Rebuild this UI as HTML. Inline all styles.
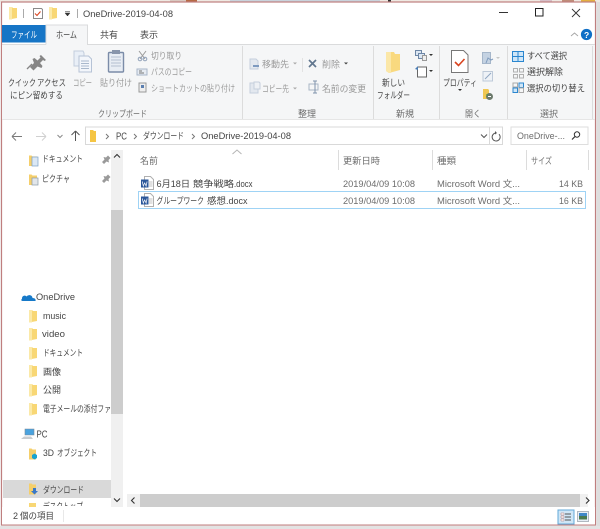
<!DOCTYPE html>
<html lang="ja"><head><meta charset="utf-8">
<style>
html,body{margin:0;padding:0;width:600px;height:529px;overflow:hidden;background:#f4f4f4}
svg{display:block;filter:blur(.3px)}
text{font-family:"Liberation Sans","Noto Sans CJK JP",sans-serif;font-size:9px;fill:#333}
.g{fill:#9a9a9a}.d{fill:#444}.m{fill:#6d6d6d}.b{fill:#222}
.l{stroke:#dcdcdc;stroke-width:1;fill:none}
</style></head><body>
<svg width="600" height="529" viewBox="0 0 600 529" xmlns="http://www.w3.org/2000/svg">
<defs>
<g id="fo"><path d="M0 1h3l1 1h4v10L0 13.500z" fill="#f8d775"/><path d="M0 1h3v12.500H0z" fill="#fbe9a8"/></g>
<g id="pin"><path d="M2 8l2.500-2.500-1-2.500L6 3.500 8 1.500 10.500 4 8.500 6l.5 2.500-2.500-1L4 10z" fill="#9a9a9a"/></g>
<g id="wd"><path d="M3.500.5h6l3 3v10h-9z" fill="#fff" stroke="#b0b0b0"/><path d="M8 6h3.500M8 8h3.500M8 10h3.500" stroke="#c0c0c0"/><rect x="0" y="3.500" width="7.500" height="8" fill="#2b579a"/><path d="M1.300 5.500l1 4.500 1.400-3 1.400 3 1-4.500" stroke="#fff" stroke-width=".7" fill="none"/></g>
</defs>
<rect width="600" height="529" fill="#f6f6f6"/>
<rect x="0" y="0" width="600" height="2" fill="#efe9e2"/>
<rect x="170" y="0" width="25" height="1.500" fill="#d9c8c0"/><rect x="186" y="0" width="11" height="2" fill="#b66a45"/><rect x="230" y="0" width="150" height="1.500" fill="#c9d3dc"/><rect x="388" y="0" width="3" height="2" fill="#333"/><rect x="540" y="0" width="12" height="2" fill="#d6bfc8"/><rect x="562" y="0" width="12" height="2" fill="#bf8c78"/><rect x="581" y="0" width="14" height="2" fill="#e4b040"/>
<rect x="1.500" y="2" width="594" height="523" fill="#fff" stroke="#bf7f7f" stroke-width="1.200"/>
<rect x="596.500" y="2" width="3.500" height="527" fill="#dedede"/>
<rect x="0" y="526" width="600" height="3" fill="#e3e3e3"/>

<!-- title bar -->
<use href="#fo" x="9" y="6"/>
<path d="M23.500 9v9" stroke="#aaa"/>
<path d="M33.500 8.500h8l1 1v9h-9z" fill="#fff" stroke="#8a8a8a"/>
<path d="M35 13.500l2 2 3.500-4" stroke="#d9431f" stroke-width="1.100" fill="none"/>
<use href="#fo" x="49" y="6"/>
<path d="M65 11.500h5M65 13h5l-2.500 3z" fill="#333" stroke="#333" stroke-width=".5"/>
<path d="M77.500 9v9" stroke="#aaa"/>
<text x="83" y="17" class="d" lengthAdjust="spacingAndGlyphs" textLength="90">OneDrive-2019-04-08</text>
<path d="M499 12.500h9" stroke="#333" stroke-width="1"/>
<rect x="535.500" y="8.500" width="7.500" height="7.500" fill="none" stroke="#222" stroke-width="1"/>
<path d="M572 9l8 8M580 9l-8 8" stroke="#333" stroke-width=".9"/>

<!-- tabs -->
<rect x="2" y="25" width="43.500" height="17.500" fill="#1675c6"/>
<text x="11" y="38" style="fill:#fff" lengthAdjust="spacingAndGlyphs" textLength="26">ファイル</text>
<path d="M46 44.500V25h41.500v19.500" fill="#f5f6f7" stroke="#dadbdc"/>
<text x="56" y="38" class="d" lengthAdjust="spacingAndGlyphs" textLength="21">ホーム</text>
<text x="100" y="38" class="d" lengthAdjust="spacingAndGlyphs" textLength="18">共有</text>
<text x="140" y="38" class="d" lengthAdjust="spacingAndGlyphs" textLength="18">表示</text>
<path d="M571 36l3.500-3 3.500 3" stroke="#a5a5a5" fill="none" stroke-width=".9"/>
<circle cx="586.500" cy="34.500" r="5.600" fill="#0f6fc6"/>
<text x="584" y="38" style="font-size:8.500px;font-weight:bold;fill:#fff">?</text>

<!-- ribbon -->
<rect x="2" y="44.500" width="593" height="75" fill="#f5f6f7"/>
<path d="M2 44.500h44M87 44.500h508" stroke="#dadbdc"/>
<path d="M2 119.500h593" stroke="#e6e6e6"/>
<path class="l" d="M242.500 46v73M373.500 46v73M439.500 46v73M507.500 46v73M592.500 46v73"/>
<path d="M30 67l4-4-1.500-4 2-1 3 2.500 3-3-1-1.500 1.500-1 5 5-1.500 1-1.500-1-3 3 2.500 3-1 2-4-1.500-4 4z" fill="#868686"/>
<path d="M27 69l5-5" stroke="#868686" stroke-width="1.300"/>
<text x="8" y="86" class="d" lengthAdjust="spacingAndGlyphs" textLength="28">クイック</text>
<text x="37" y="86" class="d" lengthAdjust="spacingAndGlyphs" textLength="29">アクセス</text>
<text x="10" y="98.500" class="d" lengthAdjust="spacingAndGlyphs" textLength="53">にピン留めする</text>
<path d="M74 51h9l1 2v13H74z" fill="#e9eff7" stroke="#c3cedd"/>
<path d="M79 56h9.500l3 3v13H79z" fill="#f3f6fb" stroke="#b6c3d6"/>
<path d="M81 61h8M81 63.500h8M81 66h8M81 68.500h8" stroke="#a9b8cc"/>
<text x="73" y="86" class="g" lengthAdjust="spacingAndGlyphs" textLength="19">コピー</text>
<rect x="108.500" y="52.500" width="15" height="19.500" rx="1" fill="#e8edf4" stroke="#7b8ca8" stroke-width="1.400"/>
<rect x="112" y="50" width="8" height="4" fill="#8895ab"/>
<path d="M111 57h10M111 60h10M111 63h10M111 66h10" stroke="#b3bfd0"/>
<text x="100" y="86" class="g" lengthAdjust="spacingAndGlyphs" textLength="32">貼り付け</text>
<path d="M139 51l6 8M146 51l-6 8" stroke="#9a9a9a" fill="none"/><circle cx="140" cy="59" r="1.800" fill="none" stroke="#8fa0b8"/><circle cx="145" cy="59" r="1.800" fill="none" stroke="#8fa0b8"/>
<text x="151" y="59" class="g" lengthAdjust="spacingAndGlyphs" textLength="31">切り取り</text>
<rect x="137" y="69" width="10" height="6" fill="#e6ebf2" stroke="#a8b5c8"/><path d="M139 71h3M139 73h5" stroke="#777"/>
<text x="151" y="75" class="g" lengthAdjust="spacingAndGlyphs" textLength="41">パスのコピー</text>
<rect x="139" y="83" width="7" height="9" fill="#eee" stroke="#999"/><path d="M141 85h3v3h-3z" fill="#5b7fb0"/>
<text x="151" y="91.500" class="g" lengthAdjust="spacingAndGlyphs" textLength="84">ショートカットの貼り付け</text>
<text x="98" y="117" class="m" lengthAdjust="spacingAndGlyphs" textLength="49">クリップボード</text>
<path d="M250 59h6l2 2v8h-8z" fill="#e3e8ef" stroke="#c5cfdc"/><path d="M253 66h6" stroke="#7e9abf" stroke-width="2"/>
<text x="262" y="67.500" class="g" lengthAdjust="spacingAndGlyphs" textLength="27">移動先</text><path d="M293 62.500h4l-2 2z" fill="#aaa"/>
<path d="M250 83h6l2 2v8h-8z" fill="#e3e8ef" stroke="#c5cfdc"/><path d="M254 82h5l1 1v6h-6z" fill="#eef1f5" stroke="#c5cfdc"/>
<text x="262" y="92" class="g" lengthAdjust="spacingAndGlyphs" textLength="27">コピー先</text><path d="M293 87.500h4l-2 2z" fill="#aaa"/>
<path d="M302.500 58v14" stroke="#e2e2e2"/>
<path d="M309 60l7 7M316 60l-7 7" stroke="#62778f" stroke-width="1.700"/>
<text x="322" y="67.500" class="g" lengthAdjust="spacingAndGlyphs" textLength="18">削除</text><path d="M344 62.500h4l-2 2z" fill="#444"/>
<path d="M309 84h9v6h-9z" fill="none" stroke="#a9b6c6"/><path d="M315 81v12M313 81h4M313 93h4" stroke="#7f93ab"/>
<text x="322" y="92" class="g" lengthAdjust="spacingAndGlyphs" textLength="44">名前の変更</text>
<text x="298" y="117" class="m" lengthAdjust="spacingAndGlyphs" textLength="18">整理</text>
<path d="M386 52h8l1 2h5v16l-11 3-3-2z" fill="#f9d97f"/><path d="M386 52h5v21h-2l-3-2z" fill="#fbe7a8"/>
<text x="382" y="86" class="d" lengthAdjust="spacingAndGlyphs" textLength="23">新しい</text>
<text x="377" y="98.500" class="d" lengthAdjust="spacingAndGlyphs" textLength="33">フォルダー</text>
<rect x="415.500" y="50.500" width="6" height="5" fill="#dbe6f2" stroke="#6d86a6"/><rect x="418.500" y="53.500" width="6" height="5" fill="#dbe6f2" stroke="#6d86a6"/><rect x="422.500" y="55.500" width="4" height="5" fill="#eee" stroke="#999"/><path d="M429 54h4l-2 2z" fill="#333"/>
<path d="M418 67h8.500v10h-9V69" fill="#fff" stroke="#666"/><path d="M415 69l3-3v4z" fill="#4a7db5"/><path d="M429 70h4l-2 2z" fill="#333"/>
<text x="396" y="117" class="m" lengthAdjust="spacingAndGlyphs" textLength="18">新規</text>
<path d="M451.500 50.500h12l4.500 4.500v17.500h-16.500z" fill="#fff" stroke="#777"/>
<path d="M455 62l3.500 3.500 6-6.500" fill="none" stroke="#d9431f" stroke-width="1.600"/>
<text x="443" y="86" class="d" lengthAdjust="spacingAndGlyphs" textLength="34">プロパティ</text>
<path d="M458 89h4l-2 2z" fill="#333"/>
<rect x="482.500" y="52.500" width="8" height="11" fill="#c4d2e2" stroke="#a5b6ca"/><path d="M486 63l2-5 3 2 2-1" stroke="#7f9bbd" fill="none"/>
<path d="M496 57h4l-2 2z" fill="#c5c5c5"/>
<path d="M483 71.500h9.500v9.500H483z" fill="#eef2f7" stroke="#bdc9d8"/><path d="M485 79l6-6" stroke="#8fa6c2"/>
<path d="M483 89h5l1 1v9h-6z" fill="#f0c752"/><circle cx="489.500" cy="96.500" r="3.500" fill="#6c7a6c"/><path d="M488 96.500h3" stroke="#fff"/><path d="M486 94l1 2 1-1" fill="#3da23d"/>
<text x="465" y="117" class="m" lengthAdjust="spacingAndGlyphs" textLength="16">開く</text>
<path d="M512.500 51.500h11v10h-11zM518 51.500v10M512.500 56.500h11" fill="#cfe6f8" stroke="#2a86cf"/>
<text x="527" y="59" class="d" lengthAdjust="spacingAndGlyphs" textLength="40">すべて選択</text>
<path d="M513.500 68.500h4v3.500h-4zM519.500 68.500h4v3.500h-4zM513.500 74.500h4v3.500h-4zM519.500 74.500h4v3.500h-4z" fill="none" stroke="#b0b0b0"/>
<text x="527" y="75" class="d" lengthAdjust="spacingAndGlyphs" textLength="36">選択解除</text>
<path d="M513 88h4.500v4.500H513zM519 83h4.500v4.500H519z" fill="#cfe6f8" stroke="#2a86cf"/><path d="M513 83h4.500v4H513zM519 88h4.500v4.500H519z" fill="none" stroke="#a9a9a9"/>
<text x="527" y="91.500" class="d" lengthAdjust="spacingAndGlyphs" textLength="58">選択の切り替え</text>
<text x="540" y="117" class="m" lengthAdjust="spacingAndGlyphs" textLength="18">選択</text>

<!-- nav bar -->
<path d="M12 136.500h10M12 136.500l4-4M12 136.500l4 4" stroke="#7a7a7a" fill="none" stroke-width="1"/>
<path d="M36 136.500h10M46 136.500l-4-4M46 136.500l-4 4" stroke="#d0d0d0" fill="none"/>
<path d="M57.500 135l2.500 2.500 2.500-2.500" stroke="#8a8a8a" fill="none"/>
<path d="M75.500 141v-10M75.500 131l-4 4M75.500 131l4 4" stroke="#555" fill="none"/>
<rect x="85.500" y="127" width="404" height="17.500" fill="#fff" stroke="#d9d9d9"/>
<rect x="489.500" y="127" width="13" height="17.500" fill="#fff" stroke="#d9d9d9"/>
<path d="M90 130h3l1 1h2v11h-6z" fill="#f5c544"/>
<path d="M106 133.500l2.500 2.500-2.500 2.500M134 133.500l2.500 2.500-2.500 2.500M192 133.500l2.500 2.500-2.500 2.500" stroke="#777" fill="none" transform="translate(0,0.500)"/>
<text x="116" y="139.500" class="d" style="font-size:10px" lengthAdjust="spacingAndGlyphs" textLength="11">PC</text>
<text x="143" y="139" class="d" lengthAdjust="spacingAndGlyphs" textLength="41">ダウンロード</text>
<text x="201" y="139" class="d" lengthAdjust="spacingAndGlyphs" textLength="90">OneDrive-2019-04-08</text>
<path d="M481 134.500l3 3 3-3" stroke="#555" fill="none"/>
<path d="M499 134.200a4 4 0 1 1-3-1.200" stroke="#555" fill="none" stroke-width="1"/><path d="M495 131l2 2-2 1.500z" fill="#555"/>
<rect x="511" y="127" width="77" height="17.500" fill="#fff" stroke="#dedede"/>
<text x="517" y="139" class="m" lengthAdjust="spacingAndGlyphs" textLength="48">OneDrive-...</text>
<circle cx="577" cy="134.500" r="2.700" fill="none" stroke="#333"/><path d="M575 136.500l-3 3" stroke="#333" stroke-width="1.200"/>

<!-- sidebar -->
<g transform="translate(29,154)"><path d="M0 1.500h2.500l1 1H8v9.500H0z" fill="#f5cf6b"/><rect x="3" y="3" width="6" height="9" fill="#dbe8f5" stroke="#7da1c7" stroke-width=".7"/></g>
<text x="42" y="162" class="d" lengthAdjust="spacingAndGlyphs" textLength="41">ドキュメント</text>
<use href="#pin" x="100" y="154"/>
<g transform="translate(29,173)"><path d="M0 1.500h2.500l1 1H8v9.500H0z" fill="#f5cf6b"/><rect x="3" y="5" width="6" height="7" fill="#e2e6ea" stroke="#8c9aa8" stroke-width=".7"/></g>
<text x="42" y="182" class="d" lengthAdjust="spacingAndGlyphs" textLength="28">ピクチャ</text>
<use href="#pin" x="100" y="173"/>
<path d="M22 299c-.5-3 3-4.500 4.500-2.500 2-2.500 6-1.500 6 1.500 2.500 0 3.500 1.500 3 3h-13c-1.500 0-1.500-2 -.5-2z" fill="#1679c8"/>
<text x="36" y="300" class="d" lengthAdjust="spacingAndGlyphs" textLength="39">OneDrive</text>
<use href="#fo" x="29" y="309"/><text x="43" y="319" class="d" lengthAdjust="spacingAndGlyphs" textLength="23">music</text>
<use href="#fo" x="29" y="327"/><text x="42" y="337" class="d" lengthAdjust="spacingAndGlyphs" textLength="23">video</text>
<use href="#fo" x="29" y="346"/><text x="43" y="356" class="d" lengthAdjust="spacingAndGlyphs" textLength="40">ドキュメント</text>
<use href="#fo" x="29" y="364"/><text x="43" y="375" class="d" lengthAdjust="spacingAndGlyphs" textLength="18">画像</text>
<use href="#fo" x="29" y="383"/><text x="43" y="393" class="d" lengthAdjust="spacingAndGlyphs" textLength="18">公開</text>
<use href="#fo" x="29" y="402"/><text x="43" y="412" class="d" lengthAdjust="spacingAndGlyphs" textLength="68">電子メールの添付ファ</text>
<path d="M25 429h9v6h-9z" fill="#4aa3df" stroke="#7a8a99" stroke-width=".6"/>
<path d="M21 439h12l-2-2.500H24z" fill="#c8ccd0"/>
<text x="36.500" y="437.500" class="d" style="font-size:10px" lengthAdjust="spacingAndGlyphs" textLength="11">PC</text>
<g transform="translate(29,447)"><path d="M0 1.500h2.500l1 1H7v10H0z" fill="#f5cf6b"/><path d="M3 8l2.500-1.500L8 8v3l-2.500 1.500L3 11z" fill="#19a3d0"/></g>
<text x="43" y="456" class="d" lengthAdjust="spacingAndGlyphs" textLength="11">3D</text>
<text x="57" y="456" class="d" lengthAdjust="spacingAndGlyphs" textLength="40">オブジェクト</text>
<rect x="3" y="480" width="108" height="18" fill="#d9d9d9"/>
<g transform="translate(29,482)"><path d="M0 1.500h2.500l1 1H7v10H0z" fill="#f5cf6b"/><path d="M4 6h3v3h2l-3.500 3.500L2 9h2z" fill="#3a78c8"/></g>
<text x="43" y="493" class="d" lengthAdjust="spacingAndGlyphs" textLength="41">ダウンロード</text>
<rect x="29" y="503" width="7" height="4" fill="#f8d775"/>
<clipPath id="cp"><rect x="0" y="498" width="111" height="8"/></clipPath>
<text x="43" y="509.500" class="d" lengthAdjust="spacingAndGlyphs" textLength="40" clip-path="url(#cp)">デスクトップ</text>
<rect x="2" y="507" width="593" height="17.500" fill="#fff"/>

<!-- scrollbars -->
<rect x="111" y="150" width="12" height="357" fill="#f0f0f0"/>
<rect x="111" y="210" width="12" height="204" fill="#cdcdcd"/>
<path d="M114 157.500l3-3 3 3" stroke="#333" fill="none" stroke-width="1.100"/>
<path d="M114 498.500l3 3 3-3" stroke="#333" fill="none" stroke-width="1.100"/>
<rect x="127" y="494" width="461" height="13" fill="#f0f0f0"/>
<rect x="140" y="494" width="440" height="13" fill="#cdcdcd"/>
<path d="M134.500 497.500l-3 3 3 3" stroke="#333" fill="none" stroke-width="1.100"/>
<path d="M586 497.500l3 3-3 3" stroke="#333" fill="none" stroke-width="1.100"/>

<!-- file list -->
<path d="M232.500 154l4.500-4 4.500 4" stroke="#b5b5b5" fill="none"/>
<text x="140" y="164" class="m" lengthAdjust="spacingAndGlyphs" textLength="18">名前</text>
<path class="l" d="M338.500 150v20M432.500 150v20M526.500 150v20M588.500 150v20"/>
<text x="343" y="164" class="m" lengthAdjust="spacingAndGlyphs" textLength="37">更新日時</text>
<text x="437" y="164" class="m" lengthAdjust="spacingAndGlyphs" textLength="19">種類</text>
<text x="531" y="164" class="m" lengthAdjust="spacingAndGlyphs" textLength="21">サイズ</text>
<use href="#wd" x="141" y="176"/>
<text x="156.500" y="187" class="d" lengthAdjust="spacingAndGlyphs" textLength="33.500">6月18日</text>
<text x="193" y="187" class="d" lengthAdjust="spacingAndGlyphs" textLength="41">競争戦略</text>
<text x="234" y="187" class="d" lengthAdjust="spacingAndGlyphs" textLength="18.500">.docx</text>
<text x="343" y="187" class="m" lengthAdjust="spacingAndGlyphs" textLength="72">2019/04/09 10:08</text>
<text x="437" y="187" class="m" lengthAdjust="spacingAndGlyphs" textLength="83">Microsoft Word 文...</text>
<text x="559" y="187" class="m" lengthAdjust="spacingAndGlyphs" textLength="24">14 KB</text>
<rect x="138.500" y="191.500" width="447" height="17" fill="#fff" stroke="#9fd3f5"/>
<use href="#wd" x="141" y="193"/>
<text x="156.500" y="204" class="d" lengthAdjust="spacingAndGlyphs" textLength="47.500">グループワーク</text>
<text x="207" y="204" class="d" lengthAdjust="spacingAndGlyphs" textLength="19">感想</text>
<text x="226" y="204" class="d" lengthAdjust="spacingAndGlyphs" textLength="21.500">.docx</text>
<text x="343" y="204" class="m" lengthAdjust="spacingAndGlyphs" textLength="72">2019/04/09 10:08</text>
<text x="437" y="204" class="m" lengthAdjust="spacingAndGlyphs" textLength="83">Microsoft Word 文...</text>
<text x="559" y="204" class="m" lengthAdjust="spacingAndGlyphs" textLength="24">16 KB</text>

<!-- status -->
<text x="13" y="519" class="d">2</text>
<text x="20" y="519" class="d" lengthAdjust="spacingAndGlyphs" textLength="34">個の項目</text>
<path d="M63.500 510v12" stroke="#e8e8e8"/>
<rect x="558" y="510" width="16" height="14" fill="#cfe6f6" stroke="#62a8d8"/>
<path d="M561 513h3v2h-3zM561 516h3v2h-3zM561 519h3v2h-3z" fill="#fff" stroke="#b07a7a" stroke-width=".5"/>
<path d="M565 514h6M565 517h6M565 520h6" stroke="#555"/>
<rect x="577.500" y="511.500" width="11" height="10" fill="#e6eef6" stroke="#b0b8c0"/>
<rect x="579" y="513" width="8" height="3" fill="#3f88c8"/><rect x="579" y="516" width="8" height="3.500" fill="#4a7a50"/>
</svg>
</body></html>
